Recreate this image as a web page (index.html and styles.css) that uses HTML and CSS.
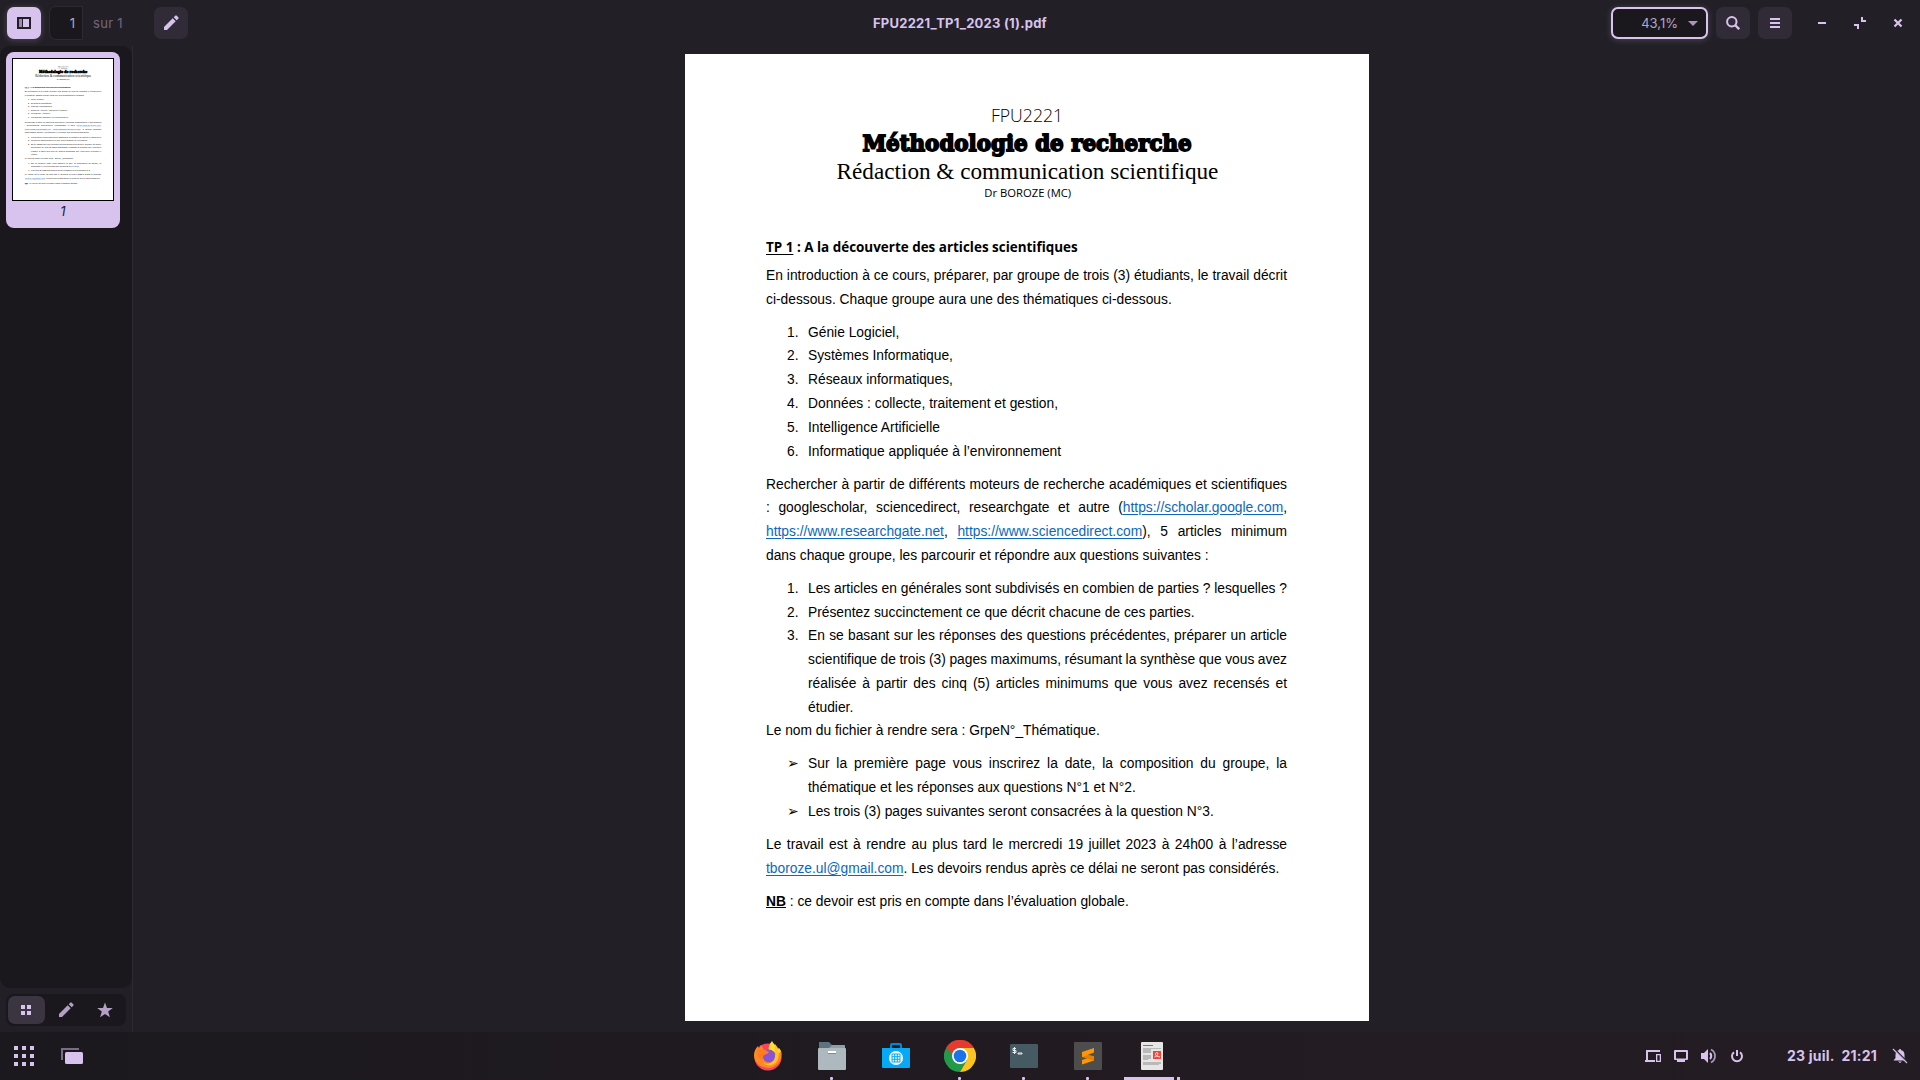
FILE: index.html
```html
<!DOCTYPE html>
<html lang="fr">
<head>
<meta charset="utf-8">
<title>FPU2221_TP1_2023 (1).pdf</title>
<link rel="stylesheet" href="styles.css">
</head>
<body>
<div class="viewer">
  <header class="topbar">
    <div class="top-left">
      <button class="btn btn-active" aria-label="Panneau latéral"><svg width="14" height="12" viewBox="0 0 14 12"><path d="M0 0h14v12H0z" fill="#221d29"/><path d="M2 2h3v8H2z" fill="#9c8cad"/><path d="M6 2h6v8H6z" fill="#d8c3ee"/></svg></button>
      <div class="page-entry">1</div>
      <span class="page-total">sur 1</span>
      <button class="btn btn-edit" aria-label="Annoter"><svg width="16" height="16" viewBox="0 0 16 16" fill="#d8c3ee"><path d="M1 12L9.700 3.300 12.700 6.300 4 15H1zM10.700 2.300l1.600-1.600q.7-.7 1.400 0l1.600 1.600q.7.700 0 1.400l-1.600 1.600z"/></svg></button>
    </div>
    <h1 class="window-title">FPU2221_TP1_2023 (1).pdf</h1>
    <div class="top-right">
      <div class="zoom-box"><span>43,1%</span><svg width="10" height="5" viewBox="0 0 10 5"><path d="M0 0h10L5 5z" fill="#a997bb"/></svg></div>
      <button class="btn" aria-label="Rechercher"><svg width="14" height="14" viewBox="0 0 14 14" fill="none" stroke="#d8c3ee" stroke-width="2"><circle cx="5.800" cy="5.800" r="4.700"/><path d="M9 9l4.200 4.200" stroke-width="2.400"/></svg></button>
      <button class="btn" aria-label="Menu"><svg width="10" height="10" viewBox="0 0 10 10" fill="#d8c3ee"><path d="M0 0h10v2H0zM0 4h10v2H0zM0 8h10v2H0z"/></svg></button>
      <div class="window-controls">
        <svg width="12" height="12" viewBox="0 0 12 12"><path d="M2 5h8v2H2z" fill="#d8c3ee"/></svg>
        <svg width="12" height="12" viewBox="0 0 12 12" fill="#d8c3ee"><path d="M7 0h2v3h3v2H7zM0 7h5v5H3V9H0z"/></svg>
        <svg width="12" height="12" viewBox="0 0 12 12" stroke="#d8c3ee" stroke-width="2.200"><path d="M2.500 2.500l7 7M9.500 2.500l-7 7"/></svg>
      </div>
    </div>
  </header>
  <div class="workspace">
    <aside class="sidebar">
      <div class="thumbs">
        <div class="thumb-card">
          <div class="thumb-page" aria-hidden="true"></div>
          <span class="thumb-label">1</span>
        </div>
      </div>
      <div class="side-tabs">
        <div class="side-tab side-tab-active"><svg width="10" height="10" viewBox="0 0 10 10" fill="#d8c3ee"><path d="M0 0h4v4H0zM6 0h4v4H6zM0 6h4v4H0zM6 6h4v4H6z"/></svg></div>
        <div class="side-tab"><svg width="16" height="16" viewBox="0 0 16 16" fill="#b3a1c5"><path d="M1 12L9.700 3.300 12.700 6.300 4 15H1zM10.700 2.300l1.600-1.600q.7-.7 1.400 0l1.600 1.600q.7.700 0 1.400l-1.600 1.600z"/></svg></div>
        <div class="side-tab"><svg width="16" height="16" viewBox="0 0 16 16" fill="#b3a1c5"><path d="M8 .5l2 5.400h5.800l-4.600 3.500 1.700 5.900L8 11.900l-4.900 3.400 1.700-5.900L.2 5.900H6z"/></svg></div>
      </div>
    </aside>
    <main class="canvas">
      <article class="sheet">
        <header class="doc-head">
          <div class="doc-code"><span>FPU2221</span></div>
          <div class="doc-title"><span>Méthodologie de recherche</span></div>
          <div class="doc-sub"><span>Rédaction &amp; communication scientifique</span></div>
          <div class="doc-author"><span>Dr BOROZE (MC)</span></div>
        </header>
        <h2 class="doc-h"><span><u>TP 1</u> : A la découverte des articles scientifiques</span></h2>
        <p>En introduction à ce cours, préparer, par groupe de trois (3) étudiants, le travail décrit <span class="keep">ci-dessous.</span> Chaque groupe aura une des thématiques ci-dessous.</p>
        <ol>
          <li>Génie Logiciel,</li>
          <li>Systèmes Informatique,</li>
          <li>Réseaux informatiques,</li>
          <li>Données : collecte, traitement et gestion,</li>
          <li>Intelligence Artificielle</li>
          <li>Informatique appliquée à l’environnement</li>
        </ol>
        <p><span class="row">Rechercher à partir de différents moteurs de recherche académiques et scientifiques</span> <span class="row">: googlescholar, sciencedirect, researchgate et autre (<a>https://scholar.google.com</a>,</span> <span class="row"><a>https://www.researchgate.net</a>, <a>https://www.sciencedirect.com</a>), 5 articles minimum</span> dans chaque groupe, les parcourir et répondre aux questions suivantes :</p>
        <ol class="questions">
          <li class="dense full">Les articles en générales sont subdivisés en combien de parties ? lesquelles ?</li>
          <li>Présentez succinctement ce que décrit chacune de ces parties.</li>
          <li class="dense">En se basant sur les réponses des questions précédentes, préparer un article scientifique de trois (3) pages maximums, résumant la synthèse que vous avez réalisée à partir des cinq (5) articles minimums que vous avez recensés et <span class="row">étudier.</span></li>
        </ol>
        <p>Le nom du fichier à rendre sera : GrpeN°_Thématique.</p>
        <ul>
          <li>Sur la première page vous inscrirez la date, la composition du groupe, la thématique et les réponses aux questions N°1 et N°2.</li>
          <li>Les trois (3) pages suivantes seront consacrées à la question N°3.</li>
        </ul>
        <p>Le travail est à rendre au plus tard le mercredi 19 juillet 2023 à 24h00 à l’adresse <a>tboroze.ul@gmail.com</a>. Les devoirs rendus après ce délai ne seront pas considérés.</p>
        <p><b><u>NB</u></b> : ce devoir est pris en compte dans l’évaluation globale.</p>
      </article>
    </main>
  </div>
</div>
<footer class="taskbar">
  <div class="launchers">
    <svg width="20" height="20" viewBox="0 0 20 20" fill="#d8c3ee"><path d="M0 0h4v4H0zM8 0h4v4H8zM16 0h4v4h-4zM0 8h4v4H0zM8 8h4v4H8zM16 8h4v4h-4zM0 16h4v4H0zM8 16h4v4H8zM16 16h4v4h-4z"/></svg>
    <svg width="22" height="16" viewBox="0 0 22 16"><path d="M1 12V1h17" fill="none" stroke="#7a6b88" stroke-width="2"/><rect x="4" y="4" width="18" height="12" rx="1.500" fill="#d8c3ee"/></svg>
  </div>
  <nav class="apps">
    <div class="app"><svg width="32" height="32" viewBox="0 0 32 32">
      <circle cx="16" cy="17" r="13.600" fill="#f9455c"/>
      <path d="M20 1c-3 3-4 7-3 10l10 8c3-4 3-8 0-11l-1 1c-1-3-5-5-6-8z" fill="#ffde32"/>
      <path d="M29 11c2 8-3 16-12 17-9 0-15-6-15-13 0-4 2-7 4-9l1 3 2-4 3 5h6l8 4z" fill="#ff8a1f"/>
      <circle cx="17" cy="16" r="6.500" fill="#8754d4"/>
      <path d="M5 10c4-1 9 0 12 2-1 2-3 2-5 3-1 2-2 3-1 6-4-2-6-6-6-11z" fill="#ff7b20"/>
      <path d="M23 4c4 4 5 12 2 17-3 5-10 6-14 2 5 2 11 0 12-6 1-5-1-8 0-13z" fill="#ffc22c"/></svg></div>
    <div class="app running"><svg width="32" height="32" viewBox="0 0 32 32"><path d="M3 2h10l3 3h12q1 0 1 1v6H3z" fill="#5c7480"/><path d="M16 5h12q1 0 1 1v2H13z" fill="#8ba0ab"/><path d="M2 9q0-1 1-1h26q1 0 1 1v20q0 1-1 1H3q-1 0-1-1z" fill="#adb9bf"/><path d="M12 11h8v2h-8z" fill="#fff"/><path d="M12 13h8v1h-8z" fill="#7d8a91"/></svg></div>
    <div class="app"><svg width="32" height="32" viewBox="0 0 32 32"><path d="M11 8V5q0-1 1-1h8q1 0 1 1v3" fill="none" stroke="#0288d1" stroke-width="2"/><path d="M2 8h28v19q0 1-1 1H3q-1 0-1-1z" fill="#05a9f4"/><circle cx="16" cy="18" r="7" fill="#fff"/><path d="M12 14h8v8h-8zM14.700 14v8M17.300 14v8M12 16.700h8M12 19.300h8" fill="none" stroke="#05a9f4" stroke-width="1"/></svg></div>
    <div class="app running"><svg width="32" height="32" viewBox="0 0 32 32"><path d="M16 16L2.140 8A16 16 0 0 1 29.860 8z" fill="#e33b2e"/><path d="M2.140 8A16 16 0 0 0 16 32l6.930-12L16 16z" fill="#229a49"/><path d="M29.860 8A16 16 0 0 1 16 32l6.930-12L16 8z" fill="#fcc41f"/><path d="M2.140 8L9.070 20 16 16V8z" fill="#229a49"/><path d="M2.140 8A16 16 0 0 1 29.860 8H16a8 8 0 0 0-7.800 6z" fill="#e33b2e"/><circle cx="16" cy="16" r="8" fill="#fff"/><circle cx="16" cy="16" r="6.300" fill="#1a73e8"/></svg></div>
    <div class="app running"><svg width="32" height="32" viewBox="0 0 32 32"><rect x="2" y="4" width="28" height="24" rx="1" fill="#465a64"/><path d="M10 13h4v1h-4zM8 8.500H5v2h3v2H4.500M6.500 7v7" fill="none" stroke="#e9eef0" stroke-width="1"/></svg></div>
    <div class="app running"><svg width="32" height="32" viewBox="0 0 32 32"><rect x="2" y="2" width="28" height="28" rx="1" fill="#4d4d4d"/><path d="M10 20l12-4v4.500l-12 4z" fill="#ff9800"/><path d="M10 12.500v4.500l12 4v-4.500z" fill="#e87f00"/><path d="M10 12l12-4v4.500L10 17z" fill="#ff9800"/></svg></div>
    <div class="app current"><svg width="32" height="32" viewBox="0 0 32 32"><rect x="5" y="2" width="22" height="28" rx="1" fill="#e6e6e4"/><path d="M7 5h10v1H7z" fill="#777"/><path d="M7 8h18v1H7zM7 9h8v4H7zM7 15h8v4H7zM7 18h5v2H7zM7 22h18v2H7zM7 24h16v1H7z" fill="#b9b9b9"/><rect x="17" y="11" width="8" height="8" fill="#f4443a"/><path d="M18.500 17q4-1 3.500-4-2-1-3 1 1 3 5 3" fill="none" stroke="#fff" stroke-width=".8"/></svg></div>
  </nav>
  <div class="tray">
    <svg width="16" height="12" viewBox="0 0 16 12" fill="#d8c3ee"><path d="M1 0h14v2H3v8h7v2H0v-2h1zM11 4h5v8h-5zM12.300 5.300v5.400h2.400V5.300z" fill-rule="evenodd"/></svg>
    <svg width="14" height="12" viewBox="0 0 14 12" fill="#d8c3ee"><path d="M1 0h12q1 0 1 1v8q0 1-1 1h-2v2H3v-2H1q-1 0-1-1V1q0-1 1-1zM2 2v6.500h10V2z" fill-rule="evenodd"/></svg>
    <svg width="16" height="16" viewBox="0 0 16 16"><path d="M0 5h3l4-4v14l-4-4H0z" fill="#d8c3ee"/><path d="M9 5q2.500 3 0 6" fill="none" stroke="#d8c3ee" stroke-width="2"/><path d="M10 1.500q4 2 4 6.500t-4 6.500" fill="none" stroke="#a997bb" stroke-width="1.800"/></svg>
    <svg width="14" height="14" viewBox="0 0 14 14" fill="none" stroke="#d8c3ee" stroke-width="2"><path d="M4 3.200a5 5 0 1 0 6 0M7 1v6"/></svg>
    <time class="clock">23 juil.&nbsp; 21:21</time>
    <svg width="16" height="16" viewBox="0 0 16 16"><path d="M8 1q1 0 1.200 1.200Q12.500 3 12.500 7v3l2 2.500h-13L3.500 10V7q0-4 3.300-4.800Q7 1 8 1zM6 13.500h4l-2 1.500z" fill="#d8c3ee"/><path d="M2 .5l14 14" stroke="#231c22" stroke-width="1.500"/><path d="M1 1l14 14" stroke="#c9b5de" stroke-width="1.300"/></svg>
  </div>
</footer>
<script src="thumbnail.js"></script>
</body>
</html>
```
FILE: styles.css
```css
* { box-sizing: border-box; }

body {
  margin: 0;
  width: 1920px;
  height: 1080px;
  overflow: hidden;
  display: flex;
  flex-direction: column;
  background: #222026;
  color: #d8c3ee;
  font-family: Inter, "Noto Sans", sans-serif;
}

svg { display: block; flex: none; }

.viewer { height: 1032px; display: flex; flex-direction: column; }

/* Header bar */
.topbar {
  height: 46px;
  flex: none;
  display: grid;
  grid-template-columns: 1fr auto 1fr;
  align-items: center;
}
.top-left { display: flex; align-items: center; padding-left: 7px; }
.top-right { display: flex; align-items: center; justify-content: flex-end; gap: 8px; padding-right: 16px; }

.btn {
  width: 34px;
  height: 32px;
  padding: 0;
  border: 0;
  border-radius: 7px;
  background: #302b37;
  display: flex;
  align-items: center;
  justify-content: center;
}
.btn-active { background: #d8c3ee; box-shadow: 0 1px 6px rgba(216, 195, 238, .25); }
.btn-edit { margin-left: 31px; }

.page-entry {
  width: 34px;
  height: 34px;
  margin-left: 8px;
  padding-right: 7px;
  border: 1px solid #2e2a34;
  border-radius: 7px 0 0 7px;
  background: #1a181d;
  color: #b7a5c9;
  font-size: 13px;
  line-height: 32px;
  text-align: right;
}
.page-total { width: 30px; margin-left: 10px; padding-bottom: 1px; color: #73677f; font-size: 13px; letter-spacing: .3px; white-space: nowrap; }
.window-title { margin: 0; padding-bottom: 1px; font-size: 13px; font-weight: 700; line-height: 20px; letter-spacing: .22px; }

.zoom-box {
  width: 97px;
  height: 32px;
  padding: 0 8px 1px 0;
  border: 2px solid #d8c3ee;
  border-radius: 7px;
  background: #1a181d;
  box-shadow: 0 1px 6px rgba(216, 195, 238, .22);
  color: #b7a5c9;
  font-size: 13px;
  display: flex;
  align-items: center;
  justify-content: flex-end;
  gap: 10px;
}
.zoom-box svg { margin-top: 2px; }
.window-controls { display: flex; gap: 26px; margin-left: 16px; }

/* Sidebar */
.workspace { flex: 1; display: flex; min-height: 0; }
.sidebar { width: 133px; border-right: 1px solid #2e2a34; display: flex; flex-direction: column; }
.thumbs { height: 942px; padding: 6px; border-radius: 10px; background: #1a181d; }
.thumb-card {
  width: 114px;
  height: 176px;
  padding: 6px;
  border-radius: 8px;
  background: #d8c3ee;
  text-align: center;
}
.thumb-page { width: 102px; height: 143px; border: 1px solid #000; background: #fff; overflow: hidden; text-align: left; }
.thumb-page .sheet { transform: scale(.1465); transform-origin: 0 0; }
.thumb-page .doc-title { -webkit-text-stroke: 4px #000; }
.thumb-label { display: block; color: #221d29; font-size: 13px; font-style: italic; line-height: 20px; }
.side-tabs {
  width: 120px;
  height: 32px;
  margin: 6px;
  padding: 2px;
  border-radius: 8px;
  background: #1a181d;
  display: flex;
  gap: 2px;
}
.side-tab { width: 37px; height: 28px; border-radius: 7px; display: flex; align-items: center; justify-content: center; }
.side-tab-active { padding-right: 1px; background: #3a3541; }

/* Document */
.canvas { flex: 1; padding: 8px 0 0 552px; }
.sheet {
  width: 684px;
  height: 967px;
  padding: 49px 82px 0 81px;
  background: #fff;
  color: #000;
  font-family: "Liberation Sans", Arial, sans-serif;
  font-size: 13.8px;
  line-height: 23.77px;
}
.doc-head { height: 132px; padding-left: 2px; text-align: center; white-space: nowrap; }
.doc-head div { display: flex; justify-content: center; }
.doc-head span, .doc-h span { flex: none; display: inline-block; }
.doc-code { height: 25px; font: 300 18.6px/24px "Open Sans", sans-serif; }
.doc-code span { transform: scaleX(.95); }
.doc-title { height: 30px; font: 700 23px/30px "DejaVu Serif", serif; -webkit-text-stroke: 1.8px #000; }
.doc-title span { transform: scaleX(.93); }
.doc-sub { height: 26px; font: 400 23.2px/26px "Liberation Serif", serif; }
.doc-author { height: 17px; font: 400 11.6px/17px "Open Sans", sans-serif; }
.doc-author span { transform: scaleX(.97); }
.doc-h { height: 29px; margin: 0; font: 700 14px/24px "Open Sans", sans-serif; white-space: nowrap; }
.doc-h span { transform: scaleX(.96); transform-origin: 0 50%; }
.doc-h u { text-underline-offset: 2px; }

.sheet p { margin: 0 0 9.2px; text-align: justify; }
.keep { white-space: nowrap; }
.sheet p .row { display: block; text-align-last: justify; }
.sheet ol, .sheet ul { margin: 0 0 9.2px; padding: 0 0 0 42px; list-style: none; counter-reset: item; text-align: justify; }
.sheet ol.questions { margin-bottom: 0; }
.sheet li { counter-increment: item; }
.sheet li::before { content: counter(item) "."; display: inline-block; width: 21px; margin-left: -21px; text-align-last: left; }
.sheet ul li::before { content: "➢"; font-family: "DejaVu Sans", sans-serif; font-size: 14px; line-height: 1; }
.sheet li.dense { word-spacing: -.6px; }
.sheet li.full { text-align-last: justify; }
.sheet a { color: #0b67c2; text-decoration: underline; text-underline-offset: 2px; }

/* Taskbar */
.taskbar {
  height: 48px;
  display: grid;
  grid-template-columns: 1fr auto 1fr;
  background: linear-gradient(90deg, #1b191e 0, #1e1a20 30%, #221b21 60%, #231c22 100%);
}
.launchers { display: flex; align-items: center; gap: 27px; padding: 0 0 0 14px; }
.apps { display: flex; gap: 32px; }
.app {
  width: 32px;
  padding-top: 8px;
  position: relative;
}
.running::after { content: ""; position: absolute; left: 14px; bottom: 0; width: 3px; height: 3px; border-radius: 1px; background: #d8c3ee; }
.current::after { content: ""; position: absolute; left: -12px; bottom: 0; width: 50px; height: 3px; background: #d8c3ee; }
.current::before { content: ""; position: absolute; left: 41px; bottom: 0; width: 3px; height: 3px; background: #d8c3ee; }
.tray { display: flex; align-items: center; justify-content: flex-end; gap: 13px; padding-right: 12px; }
.clock { width: 91px; margin: 0 1px 0 30px; padding-bottom: 1px; font-size: 14px; font-weight: 700; letter-spacing: .2px; white-space: nowrap; }
```
FILE: thumbnail.js
```js
// The sidebar preview is a scaled copy of the page.
const sheet = document.querySelector('.canvas .sheet');
document.querySelector('.thumb-page').appendChild(sheet.cloneNode(true));
```
